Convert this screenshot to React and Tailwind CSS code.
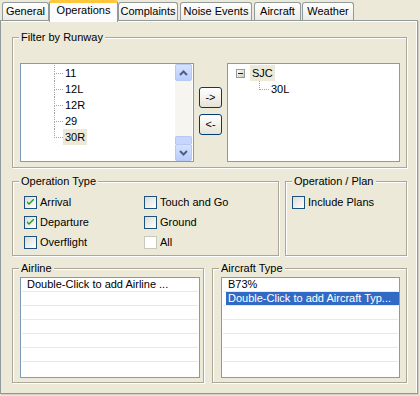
import React from 'react';

const Tab = ({ label, width, selected, className = '' }) => {
    if (selected) {
        return (
            <div className={`relative z-10 h-[22px] -mb-[2px] rounded-t-[3px] border-x border-[#919B9C] border-t-[3px] border-t-[#FFC83C] bg-[#FCFCFE] flex justify-center pt-[1px] ${width} ${className}`}>
                <span className="leading-[13px]">{label}</span>
            </div>
        );
    }
    return (
        <div className={`h-[18px] rounded-t-[3px] border border-b-0 border-[#919B9C] bg-gradient-to-b from-white to-[#ECEBE6] flex justify-center pt-[2px] ${width} ${className}`}>
            <span className="leading-[13px]">{label}</span>
        </div>
    );
};

const GroupBox = ({ title, className = '', children }) => (
    <div className={`relative border border-[#ACA899] shadow-[inset_1px_1px_0_#fff,1px_1px_0_#fff] ${className}`}>
        <span className="absolute left-[6px] -top-[7px] px-[2px] bg-[#ECE9D8] leading-[13px] whitespace-nowrap">{title}</span>
        {children}
    </div>
);

const Checkbox = ({ label, checked, disabled }) => (
    <div className="flex items-center h-[13px]">
        <div className={`w-[13px] h-[13px] border flex items-center justify-center ${disabled ? 'border-[#CAC8BB] bg-white' : 'border-[#1C5180] bg-gradient-to-br from-[#DCDCD7] to-white'}`}>
            {checked && (
                <svg width="7" height="7" viewBox="0 0 7 7">
                    <path d="M0 2 L0 4 L2 6 L7 1 L7 -1 L2 4 Z" fill="#21A121" />
                </svg>
            )}
        </div>
        <span className="ml-[3px] leading-[13px] whitespace-nowrap">{label}</span>
    </div>
);

const Connector = ({ last }) => (
    <div className="w-[9px] h-full flex flex-col shrink-0">
        <div className="h-[9px] border-l border-b border-dotted border-[#A0A0A0]" />
        {!last && <div className="h-[7px] border-l border-dotted border-[#A0A0A0]" />}
    </div>
);

const ScrollButton = ({ up }) => (
    <div className="h-[17px] rounded-[2px] border border-[#B6C9F4] bg-gradient-to-b from-[#D6E2FD] to-[#B9CDFB] flex items-center justify-center">
        <svg width="9" height="6" viewBox="0 0 9 6">
            {up
                ? <polyline points="1,5 4.5,1.5 8,5" fill="none" stroke="#4D6185" strokeWidth="2" />
                : <polyline points="1,1 4.5,4.5 8,1" fill="none" stroke="#4D6185" strokeWidth="2" />}
        </svg>
    </div>
);

const ListRows = ({ items }) => (
    <div className="flex flex-col">
        {items.map((item, i) => (
            <div key={i} className="h-[14px] flex flex-col">
                <div className="h-[13px] flex items-center">
                    {item.text ? (
                        <span className={`ml-[4px] pl-[2px] leading-[13px] whitespace-nowrap ${item.selected ? 'flex-1 bg-[#316AC5] text-white' : ''}`}>{item.text}</span>
                    ) : null}
                </div>
                <div className="h-[1px] mx-[1px] bg-[#ECE9DC]" />
            </div>
        ))}
    </div>
);

const XpButton = ({ label }) => (
    <button className="w-[23px] h-[21px] rounded-[3px] border border-[#003C74] bg-gradient-to-b from-white to-[#E6E3D6] flex items-center justify-center leading-[13px]">
        {label}
    </button>
);

const App = () => {
    const runways = ['11', '12L', '12R', '29', '30R'];

    return (
        <div className="w-[420px] h-[396px] bg-[#ECE9D8] text-black text-[11px] font-['Liberation_Sans',Arial,sans-serif] overflow-hidden">
            {/* tabs */}
            <div className="h-[20px] flex items-end pl-[2px]">
                <Tab label="General" width="w-[47px]" />
                <Tab label="Operations" width="w-[69px]" selected />
                <Tab label="Complaints" width="w-[60px]" />
                <Tab label="Noise Events" width="w-[72px]" className="ml-[2px]" />
                <Tab label="Aircraft" width="w-[47px]" className="ml-[2px]" />
                <Tab label="Weather" width="w-[52px]" className="ml-[1px]" />
            </div>

            {/* panel */}
            <div className="w-[418px] h-[374px] border border-[#919B9C] shadow-[inset_0_1px_0_#fff,inset_-1px_0_0_#fff,1px_1px_0_#D0CDBE] pl-[11px] pt-[16px] flex flex-col">
                <GroupBox title="Filter by Runway" className="w-[395px] h-[131px] pl-[7px] pt-[25px]">
                    <div className="flex">
                        {/* runway tree */}
                        <div className="w-[174px] h-[99px] border border-[#7F9DB9] bg-white flex">
                            <div className="flex-1 pt-[1px] pl-[33px]">
                                {runways.map((r, i) => (
                                    <div key={r} className="h-[16px] flex">
                                        <Connector last={i === runways.length - 1} />
                                        <div className="flex items-center">
                                            <span className={`px-[2px] leading-[16px] ${r === '30R' ? 'bg-[#ECE9D8]' : ''}`}>{r}</span>
                                        </div>
                                    </div>
                                ))}
                            </div>
                            <div className="w-[17px] mr-[1px] flex flex-col bg-[#F6F5EF]">
                                <ScrollButton up />
                                <div className="flex-1 flex flex-col justify-end">
                                    <div className="h-[8px] rounded-t-[2px] border border-b-0 border-[#B6C9F4] bg-[#C7D6FC]" />
                                </div>
                                <ScrollButton />
                            </div>
                        </div>

                        <div className="ml-[5px] pt-[24px] flex flex-col gap-[6px]">
                            <XpButton label="->" />
                            <XpButton label="<-" />
                        </div>

                        {/* selected runways */}
                        <div className="ml-[5px] w-[173px] h-[99px] border border-[#7F9DB9] bg-white pt-[1px]">
                            <div className="h-[16px] flex items-center pl-[8px]">
                                <div className="w-[9px] h-[9px] border border-[#919B9C] bg-gradient-to-br from-white to-[#CFCBBA] flex items-center justify-center">
                                    <div className="w-[5px] h-[1px] bg-[#1F1F1F]" />
                                </div>
                                <span className="ml-[5px] px-[2px] leading-[16px] bg-[#ECE9D8]">SJC</span>
                            </div>
                            <div className="h-[16px] flex pl-[31px]">
                                <div className="w-[10px] shrink-0">
                                    <div className="h-[9px] border-l border-b border-dotted border-[#A0A0A0]" />
                                </div>
                                <div className="flex items-center">
                                    <span className="px-[2px] leading-[16px]">30L</span>
                                </div>
                            </div>
                        </div>
                    </div>
                </GroupBox>

                <div className="mt-[13px] flex gap-[6px]">
                    <GroupBox title="Operation Type" className="w-[267px] h-[75px] pl-[11px] pt-[14px]">
                        <div className="grid grid-cols-[120px_auto] gap-y-[7px]">
                            <Checkbox label="Arrival" checked />
                            <Checkbox label="Touch and Go" />
                            <Checkbox label="Departure" checked />
                            <Checkbox label="Ground" />
                            <Checkbox label="Overflight" />
                            <Checkbox label="All" disabled />
                        </div>
                    </GroupBox>
                    <GroupBox title="Operation / Plan" className="w-[122px] h-[75px] pl-[6px] pt-[14px]">
                        <Checkbox label="Include Plans" />
                    </GroupBox>
                </div>

                <div className="mt-[12px] flex gap-[8px]">
                    <GroupBox title="Airline" className="w-[192px] h-[115px] pl-[7px] pt-[8px]">
                        <div className="w-[180px] h-[101px] border border-[#7F9DB9] bg-white overflow-hidden">
                            <ListRows items={[
                                { text: 'Double-Click to add Airline ...' },
                                {}, {}, {}, {}, {},
                            ]} />
                        </div>
                    </GroupBox>
                    <GroupBox title="Aircraft Type" className="w-[195px] h-[115px] pl-[8px] pt-[8px]">
                        <div className="w-[179px] h-[101px] border border-[#7F9DB9] bg-white overflow-hidden">
                            <ListRows items={[
                                { text: 'B73%' },
                                { text: 'Double-Click to add Aircraft Typ...', selected: true },
                                {}, {}, {}, {},
                            ]} />
                        </div>
                    </GroupBox>
                </div>
            </div>
        </div>
    );
};

export default App;
